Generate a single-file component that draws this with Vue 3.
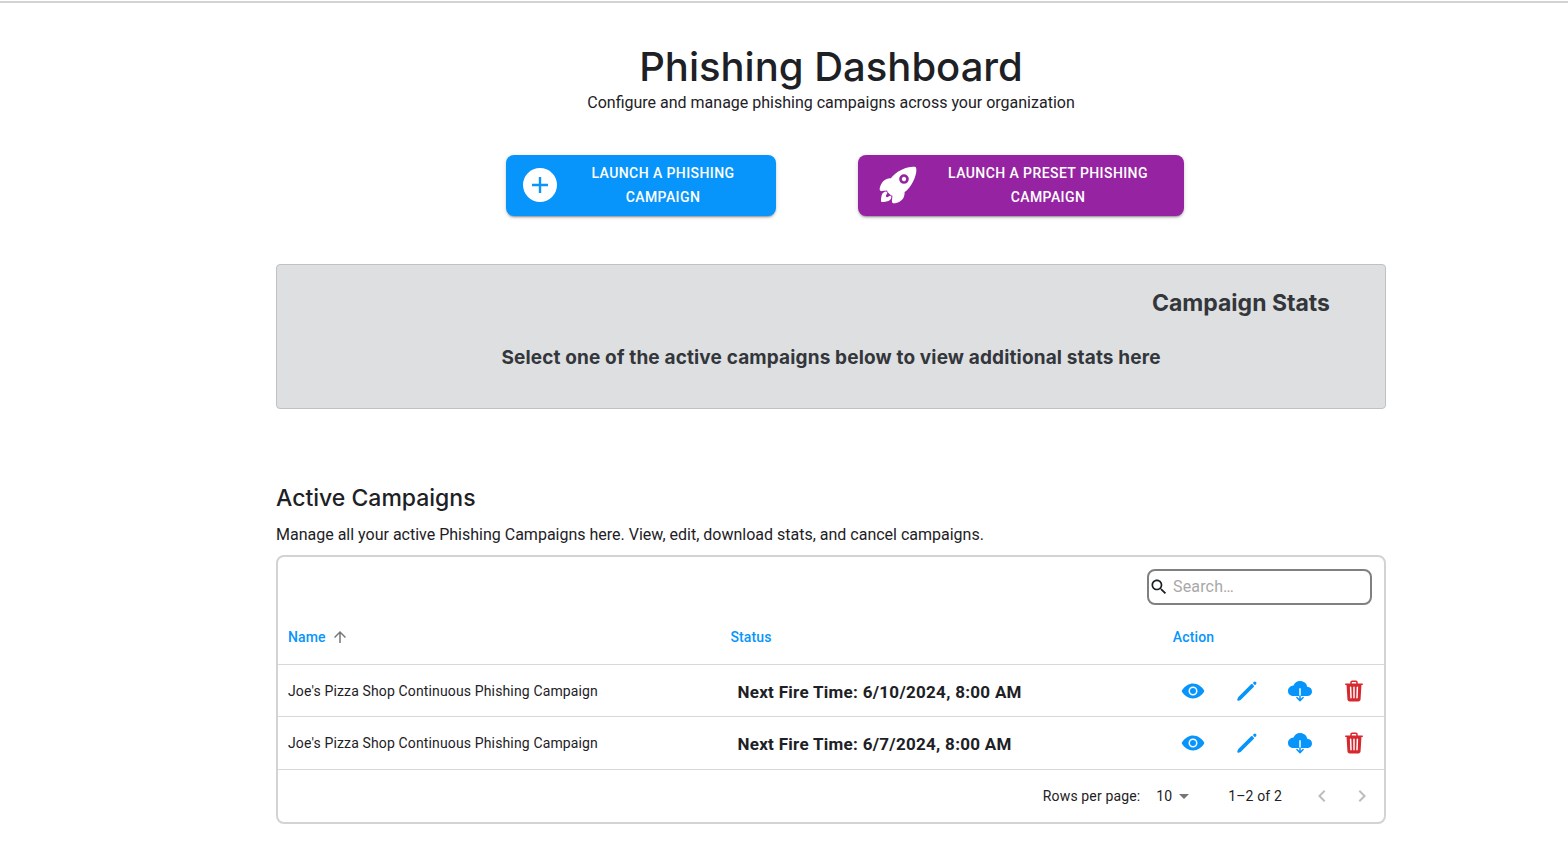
<script setup>
import { ref } from 'vue'

const search = ref('')
const rowsPerPage = ref(10)
const campaigns = [
  { id: 1, name: "Joe's Pizza Shop Continuous Phishing Campaign", status: 'Next Fire Time: 6/10/2024, 8:00 AM' },
  { id: 2, name: "Joe's Pizza Shop Continuous Phishing Campaign", status: 'Next Fire Time: 6/7/2024, 8:00 AM' },
]
</script>

<template>
  <main class="page">
    <div class="content">
      <header class="intro">
        <h1>Phishing Dashboard</h1>
        <p>Configure and manage phishing campaigns across your organization</p>
      </header>

      <div class="launchers">
        <button type="button" class="launch primary">
          <svg class="launch-icon" viewBox="0 0 44 44" aria-hidden="true">
            <circle cx="22" cy="22" r="17" fill="#fff" />
            <path d="M22 14v16M14 22h16" stroke="#0795fb" stroke-width="2.4" />
          </svg>
          <span>Launch a Phishing Campaign</span>
        </button>
        <button type="button" class="launch preset">
          <span class="rocket">
            <svg viewBox="0 0 512 512" aria-hidden="true" fill="#fff">
              <path d="M328.85 156.79a26.69 26.69 0 1018.88 7.81 26.6 26.6 0 00-18.88-7.81z" />
              <path d="M477.44 50.06a.29.29 0 010-.09 20.4 20.4 0 00-15.13-15.3c-29.8-7.27-76.68.48-128.63 21.28-52.36 21-101.42 52-134.58 85.22A320.7 320.7 0 00169.55 175c-22.33-1-42 2.18-58.57 9.41-57.74 25.41-74.23 90.44-78.62 117.14a25 25 0 0027.19 29h.13l64.32-7.02c.08.82.17 1.57.24 2.26a34.36 34.36 0 009.9 20.72l31.39 31.41a34.27 34.27 0 0020.71 9.91l2.15.23-7 64.24v.13A25 25 0 00206 480a25.25 25.25 0 004.15-.34C237 475.34 302 459.05 327.34 401c7.17-16.46 10.34-36.05 9.45-58.34a314.78 314.78 0 0033.95-29.55c33.43-33.26 64.53-81.92 85.31-133.52 20.69-51.36 28.48-98.59 21.39-129.53zM370.38 224.94a58.77 58.77 0 110-83.07 58.3 58.3 0 010 83.07z" />
              <path d="M161.93 386.44a16 16 0 00-11 2.67c-6.39 4.37-12.81 8.69-19.29 12.9-13.11 8.52-28.79-6.44-21-20l12.15-21a16 16 0 00-15.16-24.91A61.25 61.25 0 0072 353.56c-3.66 3.67-14.79 14.81-20.78 57.26A357.94 357.94 0 0048 447.59 16 16 0 0064 464h.4a359.87 359.87 0 0036.8-3.2c42.47-6 53.61-17.14 57.27-20.8a60.49 60.49 0 0017.39-35.74 16 16 0 00-13.93-17.82z" />
            </svg>
          </span>
          <span>Launch a Preset Phishing Campaign</span>
        </button>
      </div>

      <section class="stats">
        <h2>Campaign Stats</h2>
        <p>Select one of the active campaigns below to view additional stats here</p>
      </section>

      <section class="active">
        <h2>Active Campaigns</h2>
        <p>Manage all your active Phishing Campaigns here. View, edit, download stats, and cancel campaigns.</p>

        <div class="card">
          <div class="toolbar">
            <label class="search">
              <svg viewBox="0 0 24 24" aria-hidden="true">
                <path fill="#1b1f22" d="M15.5 14h-.79l-.28-.27C15.41 12.59 16 11.11 16 9.5 16 5.91 13.09 3 9.5 3S3 5.91 3 9.5 5.91 16 9.5 16c1.61 0 3.09-.59 4.23-1.57l.27.28v.79l5 4.99L20.49 19l-4.99-5zm-6 0C7.01 14 5 11.99 5 9.5S7.01 5 9.5 5 14 7.01 14 9.5 11.99 14 9.5 14z" />
              </svg>
              <input v-model="search" type="text" placeholder="Search…" aria-label="Search campaigns" />
            </label>
          </div>

          <table>
            <thead>
              <tr>
                <th scope="col" class="wide" aria-sort="ascending">
                  <button type="button" class="sort">
                    Name
                    <svg viewBox="0 0 24 24" aria-hidden="true"><path fill="#757575" d="M4 12l1.41 1.41L11 7.83V20h2V7.83l5.58 5.59L20 12l-8-8-8 8z" /></svg>
                  </button>
                </th>
                <th scope="col" class="wide">Status</th>
                <th scope="col" class="narrow">Action</th>
              </tr>
            </thead>
            <tbody>
              <tr v-for="c in campaigns" :key="c.id">
                <td>{{ c.name }}</td>
                <td class="status">{{ c.status }}</td>
                <td class="action-cell">
                  <div class="actions">
                    <button type="button" aria-label="View campaign">
                      <svg viewBox="0 0 512 512" aria-hidden="true" fill="#0795fb">
                        <circle cx="256" cy="256" r="64" />
                        <path d="M490.84 238.6c-26.46-40.92-60.79-75.68-99.27-100.53C349 110.55 302 96 255.66 96c-42.52 0-84.33 12.15-124.27 36.11-40.73 24.43-77.63 60.12-109.68 106.07a31.92 31.92 0 00-.64 35.54c26.41 41.33 60.4 76.14 98.28 100.65C162 402 207.9 416 255.66 416c46.71 0 93.81-14.43 136.2-41.72 38.46-24.77 72.72-59.66 99.08-100.92a32.2 32.2 0 00-.1-34.76zM256 352a96 96 0 1196-96 96.11 96.11 0 01-96 96z" />
                      </svg>
                    </button>
                    <button type="button" aria-label="Edit campaign">
                      <svg viewBox="0 0 512 512" aria-hidden="true" fill="#0795fb" stroke="#0795fb" stroke-width="44" stroke-linejoin="round">
                        <path d="M358.62 129.28L86.49 402.08 70 442l39.92-16.49 272.8-272.13z" />
                        <path stroke-width="32" d="M413.07 74.84l-11.79 11.78 24.1 24.1 11.79-11.79a16.51 16.51 0 000-23.35l-.75-.74a16.51 16.51 0 00-23.35 0z" />
                      </svg>
                    </button>
                    <button type="button" aria-label="Download campaign stats">
                      <svg viewBox="0 0 24 24" aria-hidden="true">
                        <path fill="#0795fb" d="M12 2C8.9 2 6.5 3.8 5.5 6.6 2.5 6.9 0 8.9 0 12c0 3.2 2.6 5 5.6 5h13.2c2.9 0 5.2-1.6 5.2-4.6 0-2.9-2.2-4.5-4.8-4.7C18.6 4.2 15.6 2 12 2z" />
                        <path stroke="#fff" stroke-width="1.5" d="M12 9.3V17" />
                        <path fill="none" stroke="#0795fb" stroke-width="1.5" stroke-linecap="round" stroke-linejoin="round" d="M12 17v4.5M8.9 18.5l3.1 3.1 3.1-3.1" />
                      </svg>
                    </button>
                    <button type="button" aria-label="Cancel campaign">
                      <svg viewBox="0 0 512 512" aria-hidden="true" fill="#d7282f">
                        <path d="M432 96h-96V72a40 40 0 00-40-40h-80a40 40 0 00-40 40v24H80a16 16 0 000 32h17l19 304.92c1.42 26.85 22 47.08 48 47.08h184c26.13 0 46.3-19.78 48-47l19-305h17a16 16 0 000-32zM192.57 416H192a16 16 0 01-16-15.43l-8-224a16 16 0 1132-1.14l8 224A16 16 0 01192.57 416zM272 400a16 16 0 01-32 0V176a16 16 0 0132 0zm32-304h-96V72a7.91 7.91 0 018-8h80a7.91 7.91 0 018 8zm32 304.57A16 16 0 01320 416h-.58A16 16 0 01304 399.43l8-224a16 16 0 1132 1.14z" />
                      </svg>
                    </button>
                  </div>
                </td>
              </tr>
            </tbody>
          </table>

          <footer class="pager">
            <label for="rows">Rows per page:</label>
            <span class="select">
              <select id="rows" v-model="rowsPerPage">
                <option :value="10">10</option>
                <option :value="25">25</option>
                <option :value="50">50</option>
              </select>
              <svg viewBox="0 0 24 24" aria-hidden="true"><path fill="#757575" d="M7 10l5 5 5-5z" /></svg>
            </span>
            <span class="range">1–2 of 2</span>
            <button type="button" disabled aria-label="Previous page">
              <svg viewBox="0 0 24 24" aria-hidden="true"><path fill="#bdbdbd" d="M15.41 7.41L14 6l-6 6 6 6 1.41-1.41L10.83 12z" /></svg>
            </button>
            <button type="button" disabled aria-label="Next page">
              <svg viewBox="0 0 24 24" aria-hidden="true"><path fill="#bdbdbd" d="M10 6L8.59 7.41 13.17 12l-4.58 4.59L10 18l6-6z" /></svg>
            </button>
          </footer>
        </div>
      </section>
    </div>
  </main>
</template>

<style>
body {
  margin: 0;
  background: #fff;
}
</style>

<style scoped>
.page {
  box-sizing: border-box;
  margin-top: 1px;
  padding: 38px 24px 28px 118px;
  border-top: 2px solid #d3d3d3;
  font-family: Roboto, "Liberation Sans", sans-serif;
  font-size: 16px;
  line-height: 24px;
  color: #1d2125;
}
.content {
  max-width: 1110px;
  margin: 0 auto;
}
h1, h2, p {
  margin: 0;
}
h1, h2 {
  font-family: Inter, "Liberation Sans", sans-serif;
}
button {
  margin: 0;
  padding: 0;
  border: 0;
  background: none;
  font: inherit;
  color: inherit;
  cursor: pointer;
}
svg {
  display: block;
}
.intro {
  padding-top: 1px;
  text-align: center;
}
.intro h1 {
  font-size: 40px;
  line-height: 49px;
  font-weight: 450;
}
.launchers {
  display: grid;
  grid-template-columns: 1fr 1fr;
  justify-items: center;
  max-width: 760px;
  margin: 40px auto 48px;
}
.launch {
  display: flex;
  align-items: center;
  gap: 4px;
  box-sizing: border-box;
  min-height: 61px;
  padding: 6px 16px 7px 12px;
  border-radius: 8px;
  box-shadow: 0 3px 1px -2px rgba(0, 0, 0, 0.2), 0 2px 2px rgba(0, 0, 0, 0.14), 0 1px 5px rgba(0, 0, 0, 0.12);
  font-size: 14px;
  font-weight: 500;
  letter-spacing: 0.03em;
  text-transform: uppercase;
  color: #fff;
}
.launch > span:last-child {
  flex: 1;
}
.primary {
  width: 270px;
  background: #0795fb;
}
.preset {
  width: 326px;
  padding-right: 17px;
  padding-left: 13px;
  background: #9624a2;
}
.launch-icon {
  width: 44px;
  height: 44px;
}
.rocket {
  display: grid;
  place-items: center;
  width: 54px;
}
.rocket svg {
  width: 42px;
  height: 42px;
}
.stats {
  padding: 20px 55px 36px;
  border: 1px solid #c0c1c3;
  border-radius: 4px;
  background: #dedfe1;
  font-family: Inter, "Liberation Sans", sans-serif;
  font-weight: 700;
  color: #33363b;
}
.stats h2 {
  font-size: 23px;
  line-height: 36px;
  font-weight: 700;
  text-align: right;
}
.stats p {
  margin-top: 22px;
  font-size: 19px;
  line-height: 29px;
  letter-spacing: 0.0075em;
  text-align: center;
}
.active {
  margin-top: 72px;
}
.active h2 {
  font-size: 23px;
  line-height: 34px;
  font-weight: 450;
}
.active > p {
  margin: 8px 0;
}
.card {
  border: 2px solid #d3d3d3;
  border-radius: 8px;
  font-size: 14px;
}
.toolbar {
  display: flex;
  justify-content: flex-end;
  padding: 12px 12px 5px;
}
.search {
  display: flex;
  align-items: center;
  box-sizing: border-box;
  width: 225px;
  height: 36px;
  border: 2px solid #808080;
  border-radius: 8px;
}
.search svg {
  flex: none;
  width: 20px;
  height: 20px;
}
.search input {
  flex: 1;
  min-width: 0;
  padding: 0 4px;
  border: 0;
  outline: 0;
  background: none;
  font: inherit;
  font-size: 16px;
  letter-spacing: 0.01em;
  color: #1d2125;
}
.search input::placeholder {
  color: #a8a8a8;
  opacity: 1;
}
table {
  width: 100%;
  table-layout: fixed;
  border-spacing: 0;
}
.wide {
  width: 40%;
}
.narrow {
  width: 20%;
}
th, td {
  box-sizing: border-box;
  height: 52px;
  padding: 0 10px;
  border-bottom: 1px solid #d8d8d8;
  text-align: left;
  letter-spacing: 0.01em;
}
th {
  height: 55px;
  font-weight: 500;
  color: #0795fb;
}
tr:last-child td {
  height: 53px;
}
.sort {
  display: flex;
  align-items: center;
  gap: 5px;
  letter-spacing: inherit;
}
.sort svg {
  width: 18px;
  height: 18px;
}
td.status {
  padding-top: 2px;
  padding-left: 17px;
  font-size: 17px;
  font-weight: 700;
  letter-spacing: 0.0171em;
}
td.action-cell {
  padding: 0 3px;
}
.actions {
  display: flex;
}
.actions button {
  display: flex;
  flex: 1;
  justify-content: center;
}
.actions svg {
  width: 24px;
  height: 24px;
}
.pager {
  display: flex;
  align-items: center;
  justify-content: flex-end;
  min-height: 52px;
  padding-right: 2px;
  letter-spacing: 0.01em;
}
.select {
  position: relative;
  margin: 0 32px 0 8px;
}
.select select {
  appearance: none;
  width: 48px;
  height: 28px;
  padding: 0 20px 0 8px;
  border: 0;
  background: none;
  font: inherit;
  letter-spacing: inherit;
  color: inherit;
}
.select svg {
  position: absolute;
  top: 2px;
  right: 0;
  width: 24px;
  height: 24px;
  pointer-events: none;
}
.range {
  margin-right: 20px;
}
.pager button {
  display: grid;
  place-items: center;
  width: 40px;
  height: 40px;
}
.pager button svg {
  width: 24px;
  height: 24px;
}
</style>
